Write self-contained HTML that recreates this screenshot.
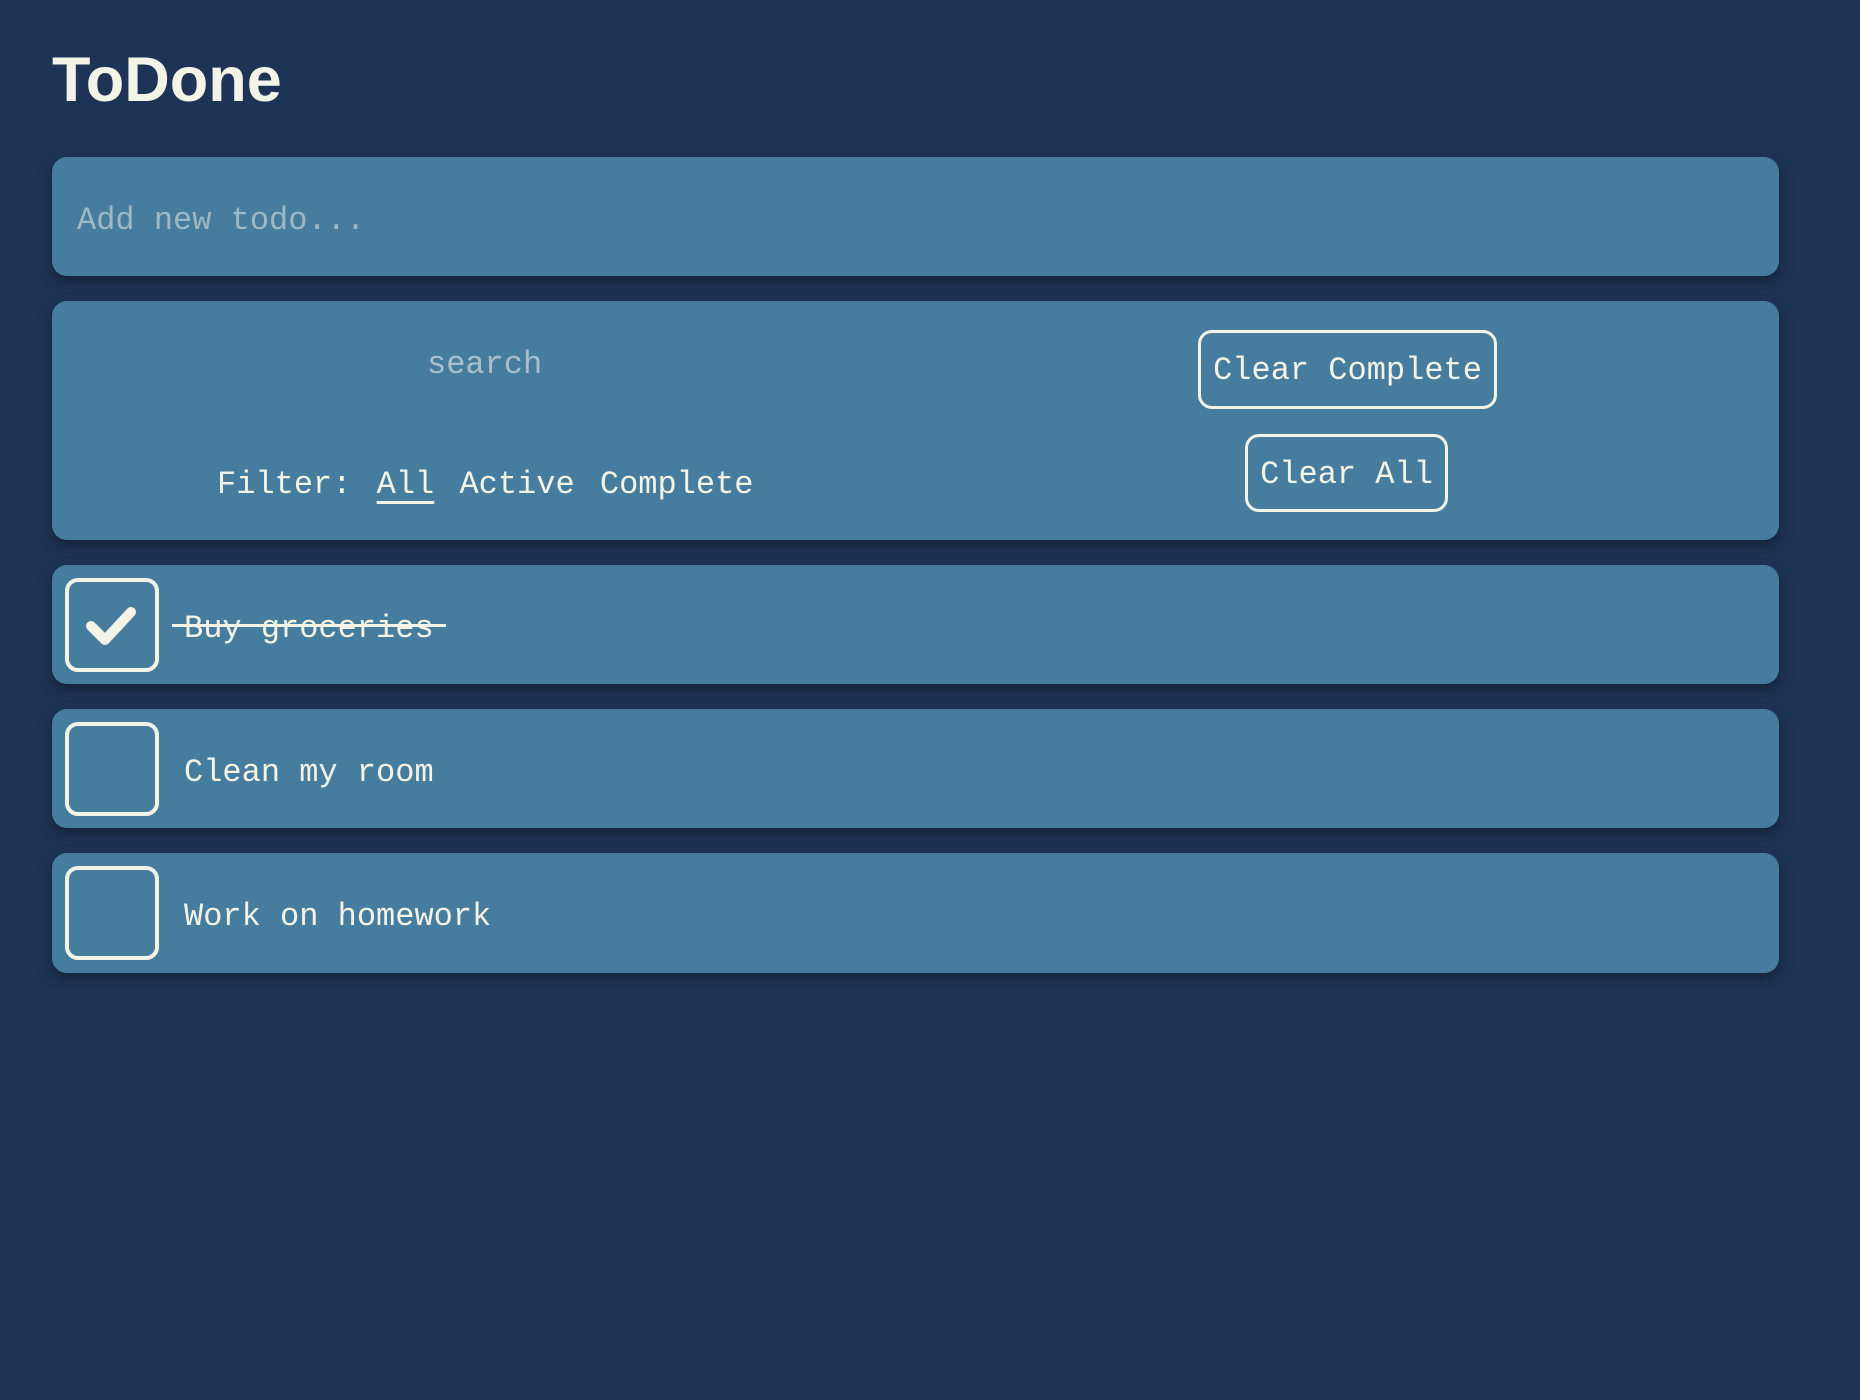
<!DOCTYPE html>
<html><head><style>
body{margin:0;background:#1e3457;width:1860px;height:1400px;font-family:"Liberation Mono",monospace;color:#f4f4e6;position:relative;overflow:hidden}
h1{position:absolute;left:52px;top:44px;margin:0;font-family:"Liberation Sans",sans-serif;font-weight:bold;font-size:63px;letter-spacing:0px}
.p{position:absolute;left:52px;width:1727px;background:#467c9e;border-radius:15px;box-shadow:0 6px 14px rgba(0,0,0,.35)}
.t{position:absolute;font-size:32px;white-space:nowrap;line-height:40px}
.cb{position:absolute;left:13px;top:13px;width:86px;height:86px;border:4px solid #f4f4e6;border-radius:13px}
.btn{position:absolute;border:3px solid #f4f4e6;border-radius:14px;box-sizing:border-box;font-size:32px;text-align:center}
.s{position:absolute;left:-12px;right:-12px;top:15px;height:3px;background:#f4f4e6}
</style></head><body>
<h1>ToDone</h1>
<div class="p" style="top:157px;height:119px"><div class="t" style="left:25px;top:44px;color:#9fb8c6">Add new todo...</div></div>
<div class="p" style="top:301px;height:239px">
<div class="t" style="left:375px;top:44px;color:#a9c0cc">search</div>
<div class="t" style="left:165px;top:164px;word-spacing:6px">Filter: <span style="text-decoration:underline;text-underline-offset:8px">All</span> Active Complete</div>
<div class="btn" style="left:1146px;top:29px;width:299px;height:79px;line-height:76px">Clear Complete</div>
<div class="btn" style="left:1193px;top:133px;width:203px;height:78px;line-height:75px">Clear All</div>
</div>
<div class="p" style="top:565px;height:119px"><div class="cb"><svg width="86" height="86" viewBox="0 0 86 86"><path d="M22 44 L36 58 L62 30" fill="none" stroke="#f4f4e6" stroke-width="10" stroke-linecap="round" stroke-linejoin="round"/></svg></div>
<div class="t" style="left:132px;top:44px">Buy groceries<div class="s"></div></div></div>
<div class="p" style="top:709px;height:119px"><div class="cb"></div><div class="t" style="left:132px;top:44px">Clean my room</div></div>
<div class="p" style="top:853px;height:120px"><div class="cb"></div><div class="t" style="left:132px;top:44px">Work on homework</div></div>
</body></html>
